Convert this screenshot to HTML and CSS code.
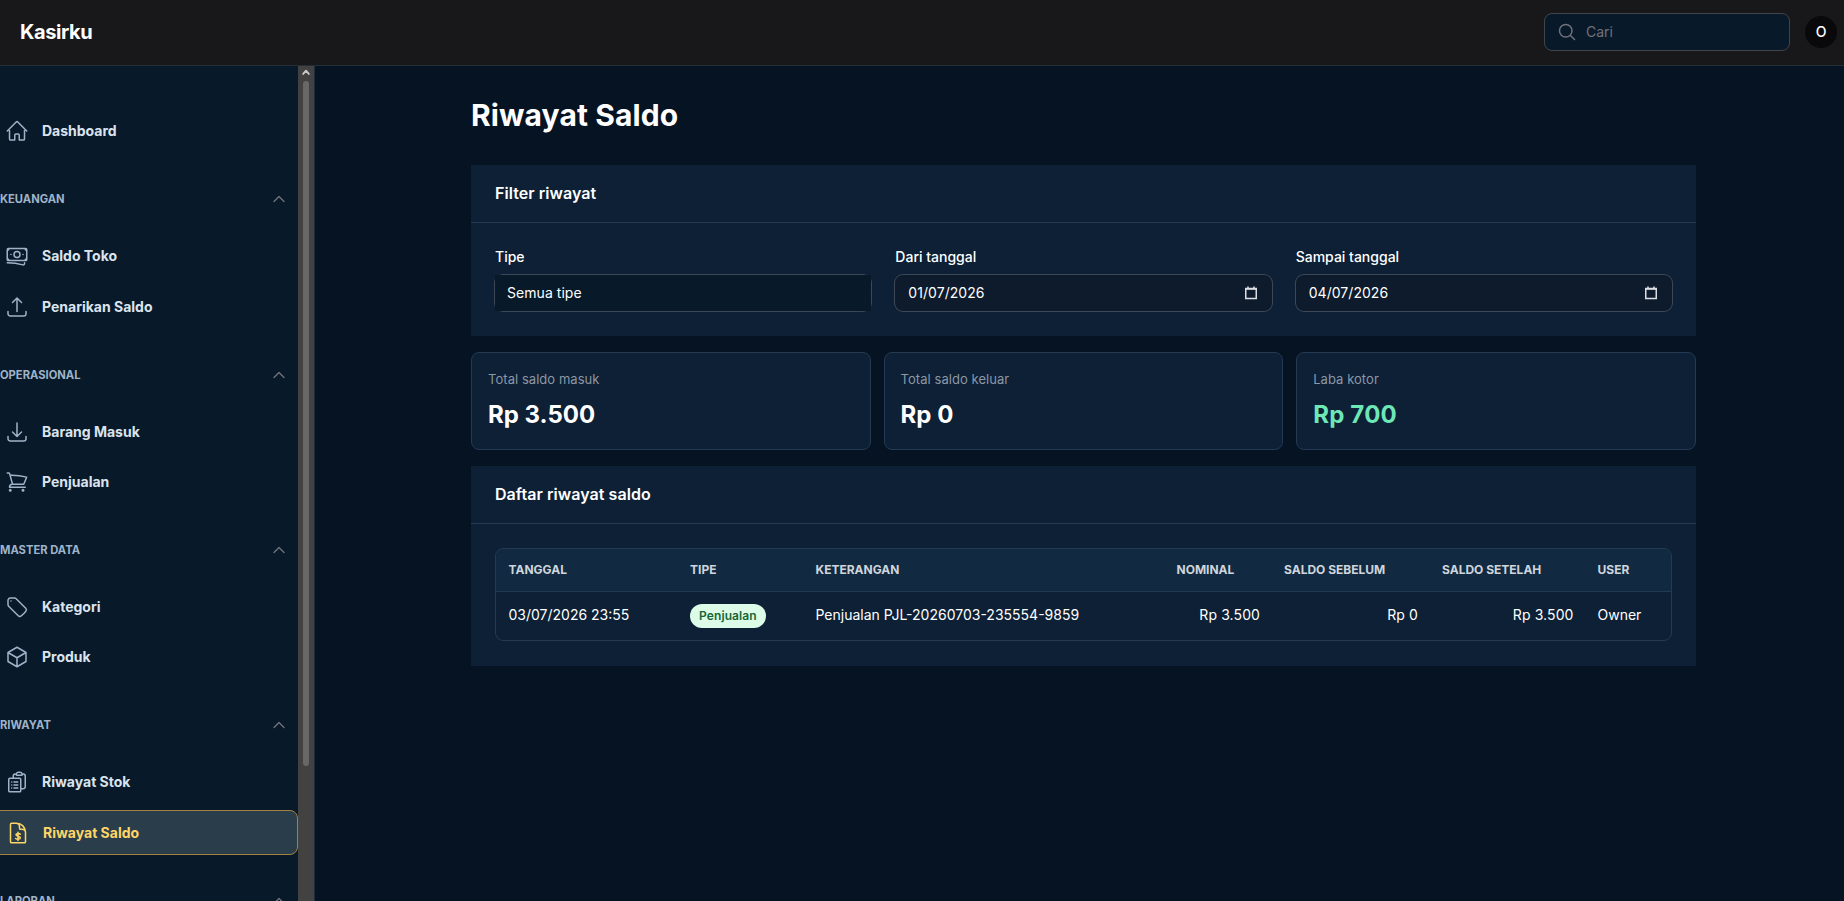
FILE: index.html
```
<!DOCTYPE html>
<html lang="id">
<head>
	<title>Riwayat Saldo - Kasirku</title>
	<meta charset="UTF-8">
	<meta name="viewport" content="width=device-width, initial-scale=1.0">
	<link rel="stylesheet" href="styles.css">
</head>
<body>
	<svg class="sprite" aria-hidden="true">
		<symbol id="i-chevron" viewBox="0 0 24 24"><path d="m4.5 15.75 7.5-7.5 7.5 7.5"/></symbol>
	</svg>
	<header class="topbar">
		<a class="brand">Kasirku</a>
		<div class="search">
			<svg viewBox="0 0 24 24"><path d="m21 21-5.197-5.197m0 0A7.5 7.5 0 1 0 5.196 5.196a7.5 7.5 0 0 0 10.607 10.607Z"/></svg>
			<span>Cari</span>
		</div>
		<div class="avatar">O</div>
	</header>
	<div class="layout">
		<aside class="sidebar">
			<nav class="nav">
				<section class="group">
					<a class="item">
						<svg viewBox="0 0 24 24"><path d="m2.25 12 8.954-8.955c.44-.439 1.152-.439 1.591 0L21.75 12M4.5 9.75v10.125c0 .621.504 1.125 1.125 1.125H9.75v-4.875c0-.621.504-1.125 1.125-1.125h2.25c.621 0 1.125.504 1.125 1.125V21h4.125c.621 0 1.125-.504 1.125-1.125V9.75"/></svg>
						<span>Dashboard</span>
					</a>
				</section>
				<section class="group">
					<h2>Keuangan <svg><use href="#i-chevron"/></svg></h2>
					<a class="item">
						<svg viewBox="0 0 24 24"><path d="M2.25 18.75a60.07 60.07 0 0 1 15.797 2.101c.727.198 1.453-.342 1.453-1.096V18.75M3.75 4.5v.75A.75.75 0 0 1 3 6h-.75m0 0v-.375c0-.621.504-1.125 1.125-1.125H20.25M2.25 6v9m18-10.5v.75c0 .414.336.75.75.75h.75m-1.5-1.5h.375c.621 0 1.125.504 1.125 1.125v9.75c0 .621-.504 1.125-1.125 1.125h-.375m1.5-1.5H21a.75.75 0 0 0-.75.75v.75m0 0H3.75m0 0h-.375a1.125 1.125 0 0 1-1.125-1.125V15m1.5 1.5v-.75A.75.75 0 0 0 3 15h-.75M15 10.5a3 3 0 1 1-6 0 3 3 0 0 1 6 0Zm3 0h.008v.008H18V10.5Zm-12 0h.008v.008H6V10.5Z"/></svg>
						<span>Saldo Toko</span>
					</a>
					<a class="item">
						<svg viewBox="0 0 24 24"><path d="M3 16.5v2.25A2.25 2.25 0 0 0 5.25 21h13.5A2.25 2.25 0 0 0 21 18.75V16.5m-13.5-9L12 3m0 0 4.5 4.5M12 3v13.5"/></svg>
						<span>Penarikan Saldo</span>
					</a>
				</section>
				<section class="group">
					<h2>Operasional <svg><use href="#i-chevron"/></svg></h2>
					<a class="item">
						<svg viewBox="0 0 24 24"><path d="M3 16.5v2.25A2.25 2.25 0 0 0 5.25 21h13.5A2.25 2.25 0 0 0 21 18.75V16.5M16.5 12 12 16.5m0 0L7.5 12m4.5 4.5V3"/></svg>
						<span>Barang Masuk</span>
					</a>
					<a class="item">
						<svg viewBox="0 0 24 24"><path d="M2.25 3h1.386c.51 0 .955.343 1.087.835l.383 1.437M7.5 14.25a3 3 0 0 0-3 3h15.75m-12.75-3h11.218c1.121-2.3 2.1-4.684 2.924-7.138a60.114 60.114 0 0 0-16.536-1.84M7.5 14.25 5.106 5.272M6 20.25a.75.75 0 1 1-1.5 0 .75.75 0 0 1 1.5 0Zm12.75 0a.75.75 0 1 1-1.5 0 .75.75 0 0 1 1.5 0Z"/></svg>
						<span>Penjualan</span>
					</a>
				</section>
				<section class="group">
					<h2>Master Data <svg><use href="#i-chevron"/></svg></h2>
					<a class="item">
						<svg viewBox="0 0 24 24"><path d="M9.568 3H5.25A2.25 2.25 0 0 0 3 5.25v4.318c0 .597.237 1.17.659 1.591l9.581 9.581c.699.699 1.78.872 2.607.33a18.095 18.095 0 0 0 5.223-5.223c.542-.827.369-1.908-.33-2.607L11.16 3.66A2.25 2.25 0 0 0 9.568 3Z"/><path d="M6 6h.008v.008H6V6Z"/></svg>
						<span>Kategori</span>
					</a>
					<a class="item">
						<svg viewBox="0 0 24 24"><path d="m21 7.5-9-5.25L3 7.5m18 0-9 5.25m9-5.25v9l-9 5.25M3 7.5l9 5.25M3 7.5v9l9 5.25m0-9v9"/></svg>
						<span>Produk</span>
					</a>
				</section>
				<section class="group">
					<h2>Riwayat <svg><use href="#i-chevron"/></svg></h2>
					<a class="item">
						<svg viewBox="0 0 24 24"><path d="M9 12h3.75M9 15h3.75M9 18h3.75m3 .75H18a2.25 2.25 0 0 0 2.25-2.25V6.108c0-1.135-.845-2.098-1.976-2.192a48.424 48.424 0 0 0-1.123-.08m-5.801 0c-.065.21-.1.433-.1.664 0 .414.336.75.75.75h4.5a.75.75 0 0 0 .75-.75 2.25 2.25 0 0 0-.1-.664m-5.8 0A2.251 2.251 0 0 1 13.5 2.25H15c1.012 0 1.867.668 2.15 1.586m-5.8 0c-.376.023-.75.05-1.124.08C9.095 4.01 8.25 4.973 8.25 6.108V8.25m0 0H4.875c-.621 0-1.125.504-1.125 1.125v11.25c0 .621.504 1.125 1.125 1.125h9.75c.621 0 1.125-.504 1.125-1.125V9.375c0-.621-.504-1.125-1.125-1.125H8.25ZM6.75 12h.008v.008H6.75V12Zm0 3h.008v.008H6.75V15Zm0 3h.008v.008H6.75V18Z"/></svg>
						<span>Riwayat Stok</span>
					</a>
					<a class="item active">
						<svg viewBox="0 0 24 24"><path d="M19.5 14.25v-2.625a3.375 3.375 0 0 0-3.375-3.375h-1.5A1.125 1.125 0 0 1 13.5 7.125v-1.5a3.375 3.375 0 0 0-3.375-3.375H8.25M5.625 2.25c-.621 0-1.125.504-1.125 1.125v17.25c0 .621.504 1.125 1.125 1.125h12.75c.621 0 1.125-.504 1.125-1.125V11.25a9 9 0 0 0-9-9H5.625Z"/><path d="M12 11.25v8.25M14.25 13.1c-.9-.9-4.3-.9-4.3.75s4.4 1.1 4.4 2.85-3.5 1.8-4.7.75"/></svg>
						<span>Riwayat Saldo</span>
					</a>
				</section>
				<section class="group">
					<h2>Laporan <svg><use href="#i-chevron"/></svg></h2>
				</section>
			</nav>
			<div class="scrollbar">
				<svg viewBox="0 0 16 16"><path d="m5 8.5 3-3.5 3 3.5"/></svg>
				<div class="thumb"></div>
			</div>
		</aside>
		<main>
			<h1>Riwayat Saldo</h1>
			<section class="panel">
				<h3>Filter riwayat</h3>
				<div class="panel-body filters">
					<div class="field">
						<label>Tipe</label>
						<div class="control select"><span>Semua tipe</span></div>
					</div>
					<div class="field">
						<label>Dari tanggal</label>
						<div class="control">
							<span>01/07/2026</span>
							<svg class="cal" viewBox="0 0 12 14"><path d="M.75 2.5h10.5v10H.75z"/><path d="M.5 3h11M3 .5v2M9 .5v2"/></svg>
						</div>
					</div>
					<div class="field">
						<label>Sampai tanggal</label>
						<div class="control">
							<span>04/07/2026</span>
							<svg class="cal" viewBox="0 0 12 14"><path d="M.75 2.5h10.5v10H.75z"/><path d="M.5 3h11M3 .5v2M9 .5v2"/></svg>
						</div>
					</div>
				</div>
			</section>
			<div class="stats">
				<div class="stat"><p>Total saldo masuk</p><strong>Rp 3.500</strong></div>
				<div class="stat"><p>Total saldo keluar</p><strong>Rp 0</strong></div>
				<div class="stat profit"><p>Laba kotor</p><strong>Rp 700</strong></div>
			</div>
			<section class="panel">
				<h3>Daftar riwayat saldo</h3>
				<div class="panel-body">
					<div class="table-wrap">
						<table>
							<colgroup>
								<col class="c-date"><col class="c-type"><col class="c-desc"><col class="c-nom"><col class="c-before"><col class="c-after"><col>
							</colgroup>
							<thead>
								<tr><th>Tanggal</th><th>Tipe</th><th>Keterangan</th><th>Nominal</th><th>Saldo Sebelum</th><th>Saldo Setelah</th><th>User</th></tr>
							</thead>
							<tbody>
								<tr>
									<td>03/07/2026 23:55</td>
									<td><span class="badge">Penjualan</span></td>
									<td>Penjualan PJL-20260703-235554-9859</td>
									<td class="num">Rp 3.500</td>
									<td class="num">Rp 0</td>
									<td class="num">Rp 3.500</td>
									<td>Owner</td>
								</tr>
							</tbody>
						</table>
					</div>
				</div>
			</section>
		</main>
	</div>
</body>
</html>
```
FILE: styles.css
```
:root {
	--bg: #061323;
	--side: #08192a;
	--panel: #0d2036;
	--line: #243a52;
}
* {box-sizing: border-box;}
body {
	margin: 0;
	height: 100vh;
	overflow: hidden;
	display: flex;
	flex-direction: column;
	background: var(--bg);
	color: #fff;
	font: 14px/20px Inter, sans-serif;
}
h1, h2, h3, p {margin: 0;}
svg {
	fill: none;
	stroke: currentColor;
	stroke-width: 1.5;
	stroke-linecap: round;
	stroke-linejoin: round;
	flex: none;
}
.sprite {display: none;}

/* top bar */
.topbar {
	height: 66px;
	flex: none;
	display: flex;
	align-items: center;
	padding: 0 7px 2px 20px;
	background: #18181a;
	border-bottom: 1px solid #252d36;
}
.brand {
	font-size: 20px;
	font-weight: 700;
	letter-spacing: -.4px;
}
.search {
	margin-left: auto;
	width: 246px;
	height: 38px;
	display: flex;
	align-items: center;
	gap: 9px;
	padding-left: 12px;
	border: 1px solid #434449;
	border-radius: 8px;
	background: var(--side);
	color: #71717a;
}
.search svg {
	width: 20px;
	height: 20px;
	stroke-width: 1.8;
}
.avatar {
	width: 32px;
	height: 32px;
	margin-left: 15px;
	border-radius: 50%;
	background: #09090b;
	text-align: center;
	line-height: 32px;
	font-weight: 500;
}

/* sidebar */
.layout {
	flex: 1;
	min-height: 0;
	display: flex;
}
.sidebar {
	width: 315px;
	flex: none;
	display: flex;
	overflow: hidden;
	background: var(--side);
	border-right: 1px solid #1c2d40;
}
.nav {
	width: 301px;
	flex: none;
	margin-left: -3px;
	padding-top: 42.8px;
}
.group {
	display: flex;
	flex-direction: column;
	gap: 5.6px;
	margin-bottom: 33.6px;
}
.group h2 {
	height: 24px;
	margin-bottom: 17px;
	padding: 0 11px 0 3px;
	display: flex;
	align-items: center;
	justify-content: space-between;
	color: #9fb3c8;
	font-size: 11.2px;
	font-weight: 700;
	text-transform: uppercase;
}
.group h2 svg {
	width: 16px;
	height: 16px;
	color: #71717a;
	stroke-width: 2;
}
.item {
	height: 44.8px;
	display: flex;
	align-items: center;
	gap: 13px;
	padding-left: 8px;
	color: #dbe4ee;
	font-weight: 700;
}
.item svg {
	width: 24px;
	height: 24px;
	color: #9fb3c8;
}
.item.active {
	margin-left: -8px;
	padding-left: 16px;
	border: 1px solid #a3823f;
	border-radius: 8px;
	background: #2a3d4b;
	color: #ffd567;
}
.item.active svg {color: #ffd567;}
.scrollbar {
	width: 16px;
	flex: none;
	background: #424242;
}
.scrollbar svg {
	display: block;
	width: 16px;
	height: 15px;
	color: #c8c8c8;
	stroke-width: 2;
}
.thumb {
	width: 6px;
	height: 685px;
	margin-left: 5px;
	border-radius: 3px;
	background: #686868;
}

/* content */
main {
	width: 1225px;
	margin-left: 156px;
	padding-top: 31px;
	display: flex;
	flex-direction: column;
	gap: 16px;
}
h1 {
	margin-bottom: 16px;
	font-size: 30px;
	line-height: 36px;
	font-weight: 700;
	letter-spacing: .1px;
}
.panel {background: var(--panel);}
.panel h3 {
	height: 58px;
	padding: 16px 24px;
	border-bottom: 1px solid var(--line);
	font-size: 16px;
	line-height: 24px;
	font-weight: 600;
	letter-spacing: .05px;
}
.panel-body {padding: 24px 24px 25px;}
.filters {
	display: grid;
	grid-template-columns: repeat(3, 1fr);
	gap: 24px;
}
.field label {
	display: block;
	margin-bottom: 8px;
	font-weight: 500;
}
.control {
	height: 36px;
	display: flex;
	align-items: center;
	justify-content: space-between;
	padding: 0 15px 0 13px;
	border-radius: 8px;
	background: #0d1b2c;
	box-shadow: 0 0 0 1px #3c4856;
	letter-spacing: .05px;
}
.select {padding: 0;}
.select span {
	width: 100%;
	padding: 8px 12px;
	background: var(--side);
}
.cal {
	width: 12px;
	height: 14px;
	color: #dcdfe2;
	stroke-linecap: butt;
	stroke-linejoin: miter;
}
.stats {
	display: grid;
	grid-template-columns: repeat(3, 1fr);
	gap: 12.8px;
}
.stat {
	height: 98px;
	padding: 16px;
	border: 1px solid var(--line);
	border-radius: 8px;
	background: var(--panel);
}
.stat p {
	color: #8c97a5;
	font-size: 13px;
	letter-spacing: .05px;
}
.stat strong {
	display: block;
	margin-top: 10px;
	font-size: 24px;
	line-height: 32px;
	font-weight: 700;
}
.profit strong {
	color: #6ee7b7;
	letter-spacing: .2px;
}
.table-wrap {
	overflow: hidden;
	border: 1px solid var(--line);
	border-radius: 8px;
}
table {
	width: 100%;
	table-layout: fixed;
	border-collapse: collapse;
}
.c-date {width: 181.5px;}
.c-type {width: 125.5px;}
.c-desc {width: 361px;}
.c-nom {width: 107.5px;}
.c-before {width: 158px;}
.c-after {width: 155.5px;}
th {
	height: 42px;
	padding: 0 12.5px;
	background: #112a42;
	border-bottom: 1px solid var(--line);
	color: #d0d5db;
	font-size: 12px;
	font-weight: 700;
	text-align: left;
	text-transform: uppercase;
	white-space: nowrap;
}
td {
	height: 49px;
	padding: 0 12.5px 2px;
	white-space: nowrap;
}
.num {
	padding-right: 11.5px;
	text-align: right;
	letter-spacing: .1px;
}
.badge {
	position: relative;
	top: 1px;
	display: inline-block;
	padding: 2px 9px;
	border-radius: 12px;
	background: #dcfce7;
	color: #166534;
	font-size: 12px;
	font-weight: 600;
	letter-spacing: .1px;
}
```
